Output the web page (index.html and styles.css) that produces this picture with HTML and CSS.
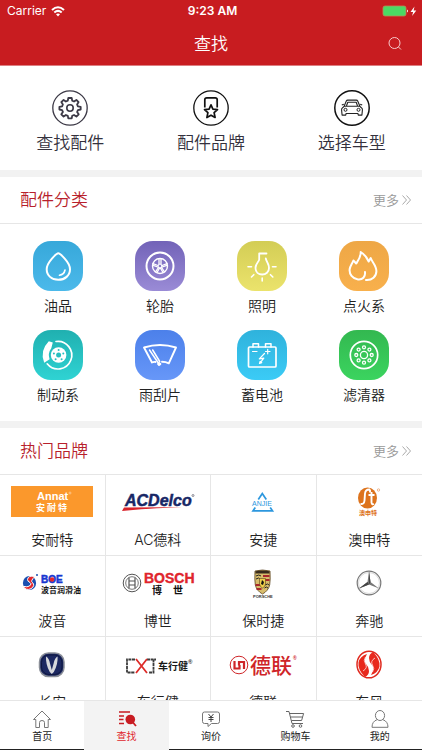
FILE: index.html
```html
<!DOCTYPE html>
<html lang="zh-CN">
<head>
<meta charset="utf-8">
<meta name="viewport" content="width=device-width, initial-scale=1">
<title>查找</title>
<link rel="stylesheet" href="styles.css">
</head>
<body>
<div class="app">
  <header class="top">
    <div class="status">
      <div class="status-left">
        <span>Carrier</span>
        <svg width="14" height="11" viewBox="0 0 14 11" fill="none" stroke="#fff" stroke-width="2"><path d="M1 4Q7-1.500 13 4M3.300 6.500Q7 3.200 10.700 6.500"/><path d="M5 8.200Q7 6.600 9 8.200L7 10.500z" fill="#fff" stroke="none"/></svg>
      </div>
      <span class="clock">9:23 AM</span>
      <div class="status-right">
        <svg width="36" height="12" viewBox="0 0 36 12"><rect x="1" y="1" width="23" height="10" rx="2" fill="#4cd964" stroke="#b98a58" stroke-width=".8"/><path d="M25 4.500q2 1.500 0 3z" fill="#fff"/><path d="M32.500 1.500 28.500 7h2.600l-1 4 4.200-5.600h-2.700z" fill="#fff"/></svg>
      </div>
    </div>
    <div class="navbar">
      <h1>查找</h1>
      <button class="search" type="button" aria-label="搜索">
        <svg width="14" height="14" viewBox="0 0 14 14" fill="none" stroke="#f6c9ca"><circle cx="6.500" cy="6" r="5.500"/><path d="M10.500 10 13 12.500"/></svg>
      </button>
    </div>
  </header>

  <main class="content">
    <nav class="quick">
      <a href="#">
        <svg width="38" height="38" viewBox="0 0 38 38" fill="none" stroke="#3c3946"><circle cx="19" cy="19" r="17.200" stroke-width="1.300"/><circle cx="19" cy="19" r="3.200" stroke-width="1.600"/><path stroke-width="1.800" stroke-linejoin="round" d="M17.300 9h3.400l.5 2.700 1.800.8 2.400-1.600 2.200 2.200-1.500 2.400.8 1.900 2.800.5v2.600l-2.800.6-.8 1.900 1.600 2.300-2.300 2.300-2.400-1.600-1.800.8-.5 2.600h-3.400l-.5-2.600-1.900-.8-2.300 1.600-2.300-2.300 1.600-2.400-.8-1.800-2.700-.6v-2.600l2.700-.5.8-1.900-1.600-2.400 2.300-2.200 2.300 1.600 1.900-.8z"/></svg>
        <span>查找配件</span>
      </a>
      <a href="#">
        <svg width="38" height="38" viewBox="0 0 38 38" fill="none" stroke="#111"><circle cx="19" cy="19" r="17.200" stroke-width="1.300"/><path stroke-width="1.700" d="M12.800 18.500v-7.700q0-2 2-2h8.400q2 0 2 2v7.700"/><path stroke-width="1.700" stroke-linejoin="round" d="m19 15.800 1.900 4.300 4.600.5-3.400 3.100 1 4.800-4.100-2.300-4.100 2.300 1-4.800-3.400-3.100 4.600-.5z"/></svg>
        <span>配件品牌</span>
      </a>
      <a href="#">
        <svg width="38" height="38" viewBox="0 0 38 38" fill="none" stroke="#222"><circle cx="19" cy="19" r="17.200" stroke="#111" stroke-width="1.500"/><path stroke-width="1.100" stroke-linejoin="round" d="M11 17.500 13.300 12q.4-.9 1.400-.9h8.600q1 0 1.400.9l2.300 5.500 1.800 1.600q.8.800.6 2l-.5 5h-3.600l-.4-1.600H13.100l-.4 1.600H9.100l-.5-5q-.2-1.200.6-2zM11.200 17.200h15.600M13.500 16.800l1.300-3.600h8.400l1.300 3.600M8.800 16l2-.8M29.200 16l-2-.8"/><circle cx="12.500" cy="20.800" r="1.500"/><circle cx="25.500" cy="20.800" r="1.500"/></svg>
        <span>选择车型</span>
      </a>
    </nav>

    <section class="block">
      <div class="block-head">
        <h2>配件分类</h2>
        <a class="more" href="#">更多<svg width="9" height="10" viewBox="0 0 9 10" fill="none" stroke="#aaa"><path d="m.5.500 4 4.500-4 4.500M4.500.500l4 4.500-4 4.500"/></svg></a>
      </div>
      <div class="cats">
        <a href="#"><svg class="ico sky" viewBox="0 0 50 50"><path stroke-width="2" d="M25.300 12.300c-1.500 0-11.600 9-11.600 16 0 6.200 5 10.500 11.600 10.500S37 34.500 37 28.300c0-7-10.200-16-11.700-16z"/><path stroke-width="1.600" d="M32 29c-.6 3-2.500 4.800-5.500 5.300"/></svg><span>油品</span></a>
        <a href="#"><svg class="ico violet" viewBox="0 0 50 50"><circle cx="25" cy="25" r="13.500" stroke-width="2"/><circle cx="25" cy="25" r="7.500" stroke-width="1.400"/><circle cx="25" cy="25" r="2"/><path stroke-width="1.300" d="M24 23v-5M26 23v-5M27 24.500l5-1.900M27.300 26l4.500-1.600M23 24.500l-5-1.900M22.700 26l-4.500-1.600M26.600 26.500l3 4.500M25.400 27l2.600 4.500M23.400 26.500l-3 4.500M24.600 27 22 31.500"/></svg><span>轮胎</span></a>
        <a href="#"><svg class="ico yellow" viewBox="0 0 50 50"><path stroke-width="1.800" d="M29.500 12.500h-7.300v6c0 2-3.700 4-3.700 8.500 0 4 3 6.500 6.700 6.500s6.800-2.500 6.800-6.500c0-4.500-2.600-6-3.200-9.500"/><path stroke-width="1.600" d="M11 25.700h3.500M35.500 25.700H39M14.500 36l2.300-2.300M33.500 33.700l2.300 2.300M25.200 37v3"/></svg><span>照明</span></a>
        <a href="#"><svg class="ico orange" viewBox="0 0 50 50"><path stroke-width="2" d="M26 31c.6 5-2.500 8-7 7.500-5.500-.7-9-5.300-8.300-10.500.4-3 2.400-5.200 3.700-8.500l2.800 3c2.800-4 4.800-6.500 4.500-11.500 5 3 6.500 6 8 9.500l2-3.500c1.200 4 5.600 7.300 5.700 13 .1 5.300-4.400 9.500-10.400 9"/></svg><span>点火系</span></a>
        <a href="#"><svg class="ico teal" viewBox="0 0 50 50"><path stroke-width="1.700" d="M23 11.500a13.800 13.800 0 1 1-8.800 22.300"/><path fill="#fff" stroke="none" d="m15.800 11.200 4 1.300-1.500 5.700q-3.800 5-1.700 11l-5.400 3.500q-4.800-12 4.600-21.500z"/><circle cx="25.600" cy="25" r="7.800" fill="#fff" stroke="none"/><g fill="#29bfc0" stroke="none"><circle cx="25.600" cy="25" r="2.500"/><circle cx="25.600" cy="20" r="1"/><circle cx="30.300" cy="23.500" r="1"/><circle cx="28.600" cy="29.200" r="1"/><circle cx="22.600" cy="29.200" r="1"/><circle cx="20.900" cy="23.500" r="1"/></g></svg><span>制动系</span></a>
        <a href="#"><svg class="ico blue" viewBox="0 0 50 50"><path stroke-width="1.900" d="M20.500 32q-2-.3-3.500.5L9 17.500q16-5 32 0l-7.200 15.800q-3-1.500-6.800-1.500"/><path stroke-width="1.500" d="m14.500 20 9.500 14M17.700 20l7 11.500"/><circle cx="24.200" cy="34" r="1.500" fill="#fff" stroke-width="1"/></svg><span>雨刮片</span></a>
        <a href="#"><svg class="ico cyan" viewBox="0 0 50 50"><rect x="11.500" y="17" width="27.500" height="20" rx="1" stroke-width="1.700"/><path stroke-width="1.500" d="M16 17v-3.200h5.500V17M28.500 17v-3.200H34V17"/><path stroke-width="1.200" d="M15.500 21.500h4.500M28.500 21.500H33M30.700 19.300v4.500M27.500 23.500l-5.200 5.300 4.500-.6-3.800 5M22.500 33.500l.6-2.200M22.500 33.500l2.200-.9"/></svg><span>蓄电池</span></a>
        <a href="#"><svg class="ico green" viewBox="0 0 50 50"><circle cx="25" cy="25" r="13.700" stroke-width="1.700"/><g stroke-width="1.300"><circle cx="25" cy="25" r="3.600"/><circle cx="25" cy="17.300" r="1.500"/><circle cx="25" cy="32.700" r="1.500"/><circle cx="17.300" cy="25" r="1.500"/><circle cx="32.700" cy="25" r="1.500"/><circle cx="19.600" cy="19.600" r="1.500"/><circle cx="30.400" cy="19.600" r="1.500"/><circle cx="19.600" cy="30.400" r="1.500"/><circle cx="30.400" cy="30.400" r="1.500"/></g></svg><span>滤清器</span></a>
      </div>
    </section>

    <section class="block">
      <div class="block-head">
        <h2>热门品牌</h2>
        <a class="more" href="#">更多<svg width="9" height="10" viewBox="0 0 9 10" fill="none" stroke="#aaa"><path d="m.5.500 4 4.500-4 4.500M4.500.500l4 4.500-4 4.500"/></svg></a>
      </div>
      <div class="brands">
        <a href="#"><svg class="logo" viewBox="0 0 82 42"><rect y="6" width="82" height="31" fill="#fb982c"/><g fill="#fff"><text class="latin" x="26" y="20" font-size="11">Annat</text><g class="cjk" font-size="9"><text x="25" y="31">安</text><text x="36" y="31">耐</text><text x="47" y="31">特</text></g></g><circle cx="59" cy="13" r="1" fill="none" stroke="#fdd3a4" stroke-width=".7"/></svg><span>安耐特</span></a>
        <a href="#"><svg class="logo" viewBox="0 0 82 42"><text class="latin slant" x="8" y="26" font-size="16" fill="#172766" stroke="#172766" stroke-width=".5">ACDelco</text><path d="M7 27.500q30-.5 58-.3Q34 28 5 31z" fill="#d8232b"/><circle cx="76" cy="15.500" r="1" fill="none" stroke="#445" stroke-width=".6"/></svg><span>AC德科</span></a>
        <a href="#"><svg class="logo" viewBox="0 0 82 42"><g fill="none" stroke="#2c97de" stroke-width="1.700"><path d="m36.300 19.500 4-6 4 6M33.300 27.500l-2.300 3.300h19.500l-2.300-3.300"/></g><text class="latin light" x="30" y="26" font-size="7" fill="#2c97de">ANJIE</text></svg><span>安捷</span></a>
        <a href="#"><svg class="logo" viewBox="0 0 82 42"><ellipse cx="39.500" cy="18" rx="9.500" ry="10.500" fill="#dd731c"/><path d="M42 9.500q-4.500-.5-5 4l-.5 7q-.3 4-4 3.500M42 9.500v3M40.500 15h6M43.500 12v10.500q.3 2.500 2.500 1.500" fill="none" stroke="#fff" stroke-width="1.900"/><text class="cjk" x="31" y="35" font-size="6" fill="#dd731c">澳申特</text><circle cx="50.500" cy="10" r="1.200" fill="none" stroke="#e79a62" stroke-width=".7"/></svg><span>澳申特</span></a>

        <a href="#"><svg class="logo" viewBox="0 0 82 42"><ellipse cx="18.500" cy="22" rx="6.600" ry="7" fill="#1b4fb0"/><path d="M24 15.500q-7-1.500-7.500 3 0 2 2.500 3t-.5 3.500q-2 1.500-6.500.3 3 4.700 8 2.400 4.500-3 1.500-6.200-2.500-1.500 2.500-6z" fill="#e3262b" stroke="#fff" stroke-width="1"/><circle cx="26" cy="14" r="1" fill="#1b4fb0"/><text class="latin" x="30" y="22" font-size="10" fill="#1737d0" stroke="#1737d0" stroke-width=".5">BOE</text><circle cx="41" cy="18.500" r="2.200" fill="#e3262b"/><text class="cjk" x="30" y="32" font-size="8" fill="#181818">波音润滑油</text></svg><span>波音</span></a>
        <a href="#"><svg class="logo" viewBox="0 0 82 42"><g fill="none" stroke="#555"><circle cx="15" cy="22" r="8.800"/><circle cx="15" cy="22" r="6.300" stroke-width=".8"/><path d="M12 16.500v11M18 16.500v11M12 20h6M12 24h6" stroke-width="1.200"/></g><text class="latin" x="27" y="22" font-size="14" fill="#e0242c" stroke="#e0242c" stroke-width=".4">BOSCH</text><g class="cjk" font-size="10" fill="#111"><text x="35" y="33">博</text><text x="56" y="33">世</text></g></svg><span>博世</span></a>
        <a href="#"><svg class="logo" viewBox="0 0 82 42"><path d="M33 10q7.500-2 15 0 .5 9-.3 14-1.500 6-7.200 9-5.700-3-7.200-9-.8-5-.3-14z" fill="#d8bd6c" stroke="#5b4320" stroke-width=".8"/><path d="M33.500 10.300q7-1.600 14 0v2.200h-14z" fill="#372b1c"/><path d="M41 14h6.500v2H41zM41 18h6.500v2H41zM33.500 23h6v2h-6zM34.500 27h5v2h-5z" fill="#a8282c"/><path d="M34 15q3-2 5 0M34 18q3-2 4 0M43 24q3-2 4 0M42.500 27q2-2 3.500 0" fill="none" stroke="#222"/><path d="M37.500 17.500h6V23q-.5 3-3 4-2.500-1-3-4z" fill="#efcf4b" stroke="#5b4320" stroke-width=".6"/><path d="m40 19 2 2-1 3-2-1z" fill="#111"/><text class="latin" x="31" y="37" font-size="4" fill="#333">PORSCHE</text></svg><span>保时捷</span></a>
        <a href="#"><svg class="logo" viewBox="0 0 82 42"><g fill="none" stroke="#777"><circle cx="41" cy="22" r="11.800" stroke-width="1.200"/><circle cx="41" cy="22" r="10.500" stroke="#c9c9c9" stroke-width=".7"/></g><path d="m41 10 1.500 11 8.500 6.500-10-4-10 4 8.500-6.500z" fill="#777"/><path d="m41 10 1.500 11L41 23.500zM31 27.500l10-4-1.500-2.500z" fill="#444"/></svg><span>奔驰</span></a>

        <a href="#"><svg class="logo" viewBox="0 0 82 42"><rect x="28.500" y="11" width="24.500" height="23.500" rx="9" fill="#1c2861" stroke="#8b8f98" stroke-width="1.500"/><rect x="30.500" y="13" width="20.500" height="19.500" rx="7.500" fill="none" stroke="#0f173f"/><path d="M35 14.500q3 1.500 4 7l1.800 6.500 1.800-6.500q1-5.500 4-7 .5 8-3.800 15.500l-2 2-2-2Q34.500 22.500 35 14.500z" fill="#d6d8dc"/></svg><span>长安</span></a>
        <a href="#"><svg class="logo" viewBox="0 0 82 42"><g fill="none" stroke="#3b3b3b" stroke-width="1.800"><path d="M18 17.500h-8v13h8" stroke-dasharray="3 .6"/><path d="M30 17.500h9M36.500 17.500v13H32" stroke-dasharray="3 .6"/></g><path d="m19 17 11 14M30 17 19 31" stroke="#dd2b28" stroke-width="1.800"/><text class="cjk" x="41" y="28" font-size="10" fill="#181818">车行健</text><text class="latin" x="71" y="22" font-size="6" fill="#333">®</text></svg><span>车行健</span></a>
        <a href="#"><svg class="logo" viewBox="0 0 82 42"><g fill="none" stroke="#cf2528"><circle cx="17" cy="23" r="8.800"/><path d="M12.500 19v7.500h5V23M22 27v-7h-5v3.500" stroke-width="2.200"/></g><text class="cjk medium" x="28" y="31" font-size="21" fill="#cf2528">德联</text><text class="latin" x="71" y="18" font-size="5" fill="#cf2528">®</text></svg><span>德联</span></a>
        <a href="#"><svg class="logo" viewBox="0 0 82 42"><ellipse cx="41" cy="22.500" rx="12" ry="13.300" fill="none" stroke="#e02b20" stroke-width="1.500"/><path d="M45 10q-4 2-4 6t3 7-1 10q7-2 8.500-8.500 1-7-6.500-14.500zM37 35q4-2 4-6t-3-7 1-10q-7 2-8.500 8.500-1 7 6.500 14.500z" fill="#e8291d"/><path d="M47 16q-5 3-2.500 7t0 7M35 29q5-3 2.500-7t0-7" fill="none" stroke="#fff" stroke-width=".7"/></svg><span>东风</span></a>
      </div>
    </section>
  </main>

  <nav class="tabs">
    <a href="#"><svg width="20" height="18" viewBox="0 0 20 18" fill="none" stroke="#777"><path d="M1.500 9.500 10 1l8.500 8.500h-2.300v8h-3.700v-5q0-2-2.500-2t-2.500 2v5H3.800v-8z"/></svg><span>首页</span></a>
    <a class="active" href="#"><svg width="20" height="18" viewBox="0 0 20 18" fill="none" stroke="#c81c22"><path stroke-width="1.300" d="M2 2h11M2 6h5M2 9.500h4.500M2 13.500h5"/><circle cx="13.300" cy="9.500" r="4.800" fill="#c81c22" stroke="none"/><path stroke-width="1.800" d="m16 12.500 3 3.500"/></svg><span>查找</span></a>
    <a href="#"><svg width="20" height="18" viewBox="0 0 20 18" fill="none" stroke="#777"><path d="M3.500 2h13q2 0 2 2v7.500q0 2-2 2h-6l-3.500 3v-3H3.500q-2 0-2-2V4q0-2 2-2z"/><path stroke="#444" d="m7.500 4 2.500 3 2.500-3M10 7v5M7.500 7.500h5M7.500 9.500h5"/></svg><span>询价</span></a>
    <a href="#"><svg width="20" height="18" viewBox="0 0 20 18" fill="none" stroke="#666"><path d="M1 1.500h3l3 12h11M4.600 3.500h14l-2 7H6.500M5.500 7h12"/><circle cx="8" cy="16" r="1.300"/><circle cx="15.500" cy="16" r="1.300"/></svg><span>购物车</span></a>
    <a href="#"><svg width="20" height="18" viewBox="0 0 20 18" fill="none" stroke="#777"><ellipse cx="10" cy="5.500" rx="4.600" ry="5"/><path d="M7 9.700Q2 11.500 2 17.300h16q0-5.800-5-7.600"/></svg><span>我的</span></a>
  </nav>
</div>
</body>
</html>
```
FILE: styles.css
```css
* {
  box-sizing: border-box;
}

body {
  margin: 0;
  background: #fff;
  color: #222;
  font-family: Inter, "Noto Sans CJK SC", sans-serif;
  font-size: 14px;
}

a {
  color: inherit;
  text-decoration: none;
}

svg {
  display: block;
  flex: none;
}

h1,
h2 {
  margin: 0;
  font-weight: 350;
  font-size: 17px;
  line-height: 24px;
}

.app {
  display: flex;
  flex-direction: column;
  height: 100vh;
}

/* Header */
.top {
  flex: none;
  background: #c81c20;
  color: #fff;
  border-bottom: 1px solid #dd7f82;
}

.status {
  display: grid;
  grid-template-columns: 1fr auto 1fr;
  align-items: center;
  height: 22px;
  padding: 0 4px 0 7px;
  font-size: 12px;
  line-height: 20px;
}

.status-left {
  display: flex;
  align-items: center;
  gap: 5px;
}

.status-right {
  display: flex;
  justify-content: flex-end;
}

.clock {
  font-weight: 600;
}

.navbar {
  display: grid;
  grid-template-columns: 1fr auto 1fr;
  align-items: center;
  height: 43px;
  padding: 0 20px;
}

.navbar h1 {
  grid-column: 2;
}

.search {
  justify-self: end;
  padding: 0;
  border: 0;
  background: none;
}

/* Scrolling content */
.content {
  flex: 1;
  min-height: 0;
  overflow-y: auto;
  scrollbar-width: none;
}

.quick {
  display: grid;
  grid-template-columns: repeat(3, 1fr);
  padding: 23px 0 15px;
}

.quick a {
  display: flex;
  flex-direction: column;
  align-items: center;
  gap: 4px;
  color: #34313d;
  font-weight: 350;
  font-size: 17px;
  line-height: 24px;
}

.block {
  border-top: 7px solid #f2f2f2;
}

.block-head {
  display: flex;
  align-items: center;
  justify-content: space-between;
  height: 47px;
  padding: 0 11px 0 20px;
  border-bottom: 1px solid #e6e6e6;
}

.block-head h2 {
  color: #b81f2c;
}

.more {
  display: flex;
  align-items: center;
  gap: 3px;
  color: #999;
  font-weight: 350;
  font-size: 13px;
  line-height: 20px;
}

.cats {
  display: grid;
  grid-template-columns: repeat(4, 1fr);
  row-gap: 14px;
  padding: 17px 7px 16px;
}

.cats a,
.brands a {
  display: flex;
  flex-direction: column;
  align-items: center;
  font-weight: 350;
  font-size: 14px;
  line-height: 20px;
}

.cats a {
  gap: 5px;
}

.ico {
  width: 50px;
  height: 50px;
  border-radius: 18px;
  fill: none;
  stroke: #fff;
  stroke-linejoin: round;
  stroke-linecap: round;
}

.sky { background: linear-gradient(#37a8da, #4bb9ea); }
.violet { background: linear-gradient(#7263b8, #9a8bd6); }
.yellow { background: linear-gradient(#d3cd55, #ebe36c); }
.orange { background: linear-gradient(#eea746, #f8b04c); }
.teal { background: linear-gradient(#20b0b0, #2fd3d3); }
.blue { background: linear-gradient(#4c80ea, #6797f8); }
.cyan { background: linear-gradient(#2fb2dc, #3bcbf6); }
.green { background: linear-gradient(#33b850, #3bd45f); }

.brands {
  display: grid;
  grid-template-columns: repeat(4, 1fr);
}

.brands a {
  gap: 8px;
  padding: 5px 0;
  border-right: 1px solid #e6e6e6;
  border-bottom: 1px solid #e6e6e6;
}

.brands a:nth-child(4n) {
  border-right: 0;
}

.logo {
  width: 82px;
  height: 42px;
}

.latin {
  font-family: "Liberation Sans", sans-serif;
  font-weight: 700;
}

.light {
  font-weight: 400;
}

.slant {
  font-style: italic;
}

.cjk {
  font-family: "Noto Sans CJK SC", sans-serif;
  font-weight: 700;
}

.medium {
  font-weight: 500;
}

/* Bottom tabs */
.tabs {
  flex: none;
  display: grid;
  grid-template-columns: repeat(5, 1fr);
  border-top: 1px solid #e6e6e6;
}

.tabs a {
  display: flex;
  flex-direction: column;
  align-items: center;
  padding: 9px 0 5px;
  border-bottom: 1px solid #222;
  font-size: 10px;
  line-height: 16px;
}

.tabs .active {
  border-color: #f3f3f3;
  background: #f3f3f3;
  color: #e0262c;
}
```
